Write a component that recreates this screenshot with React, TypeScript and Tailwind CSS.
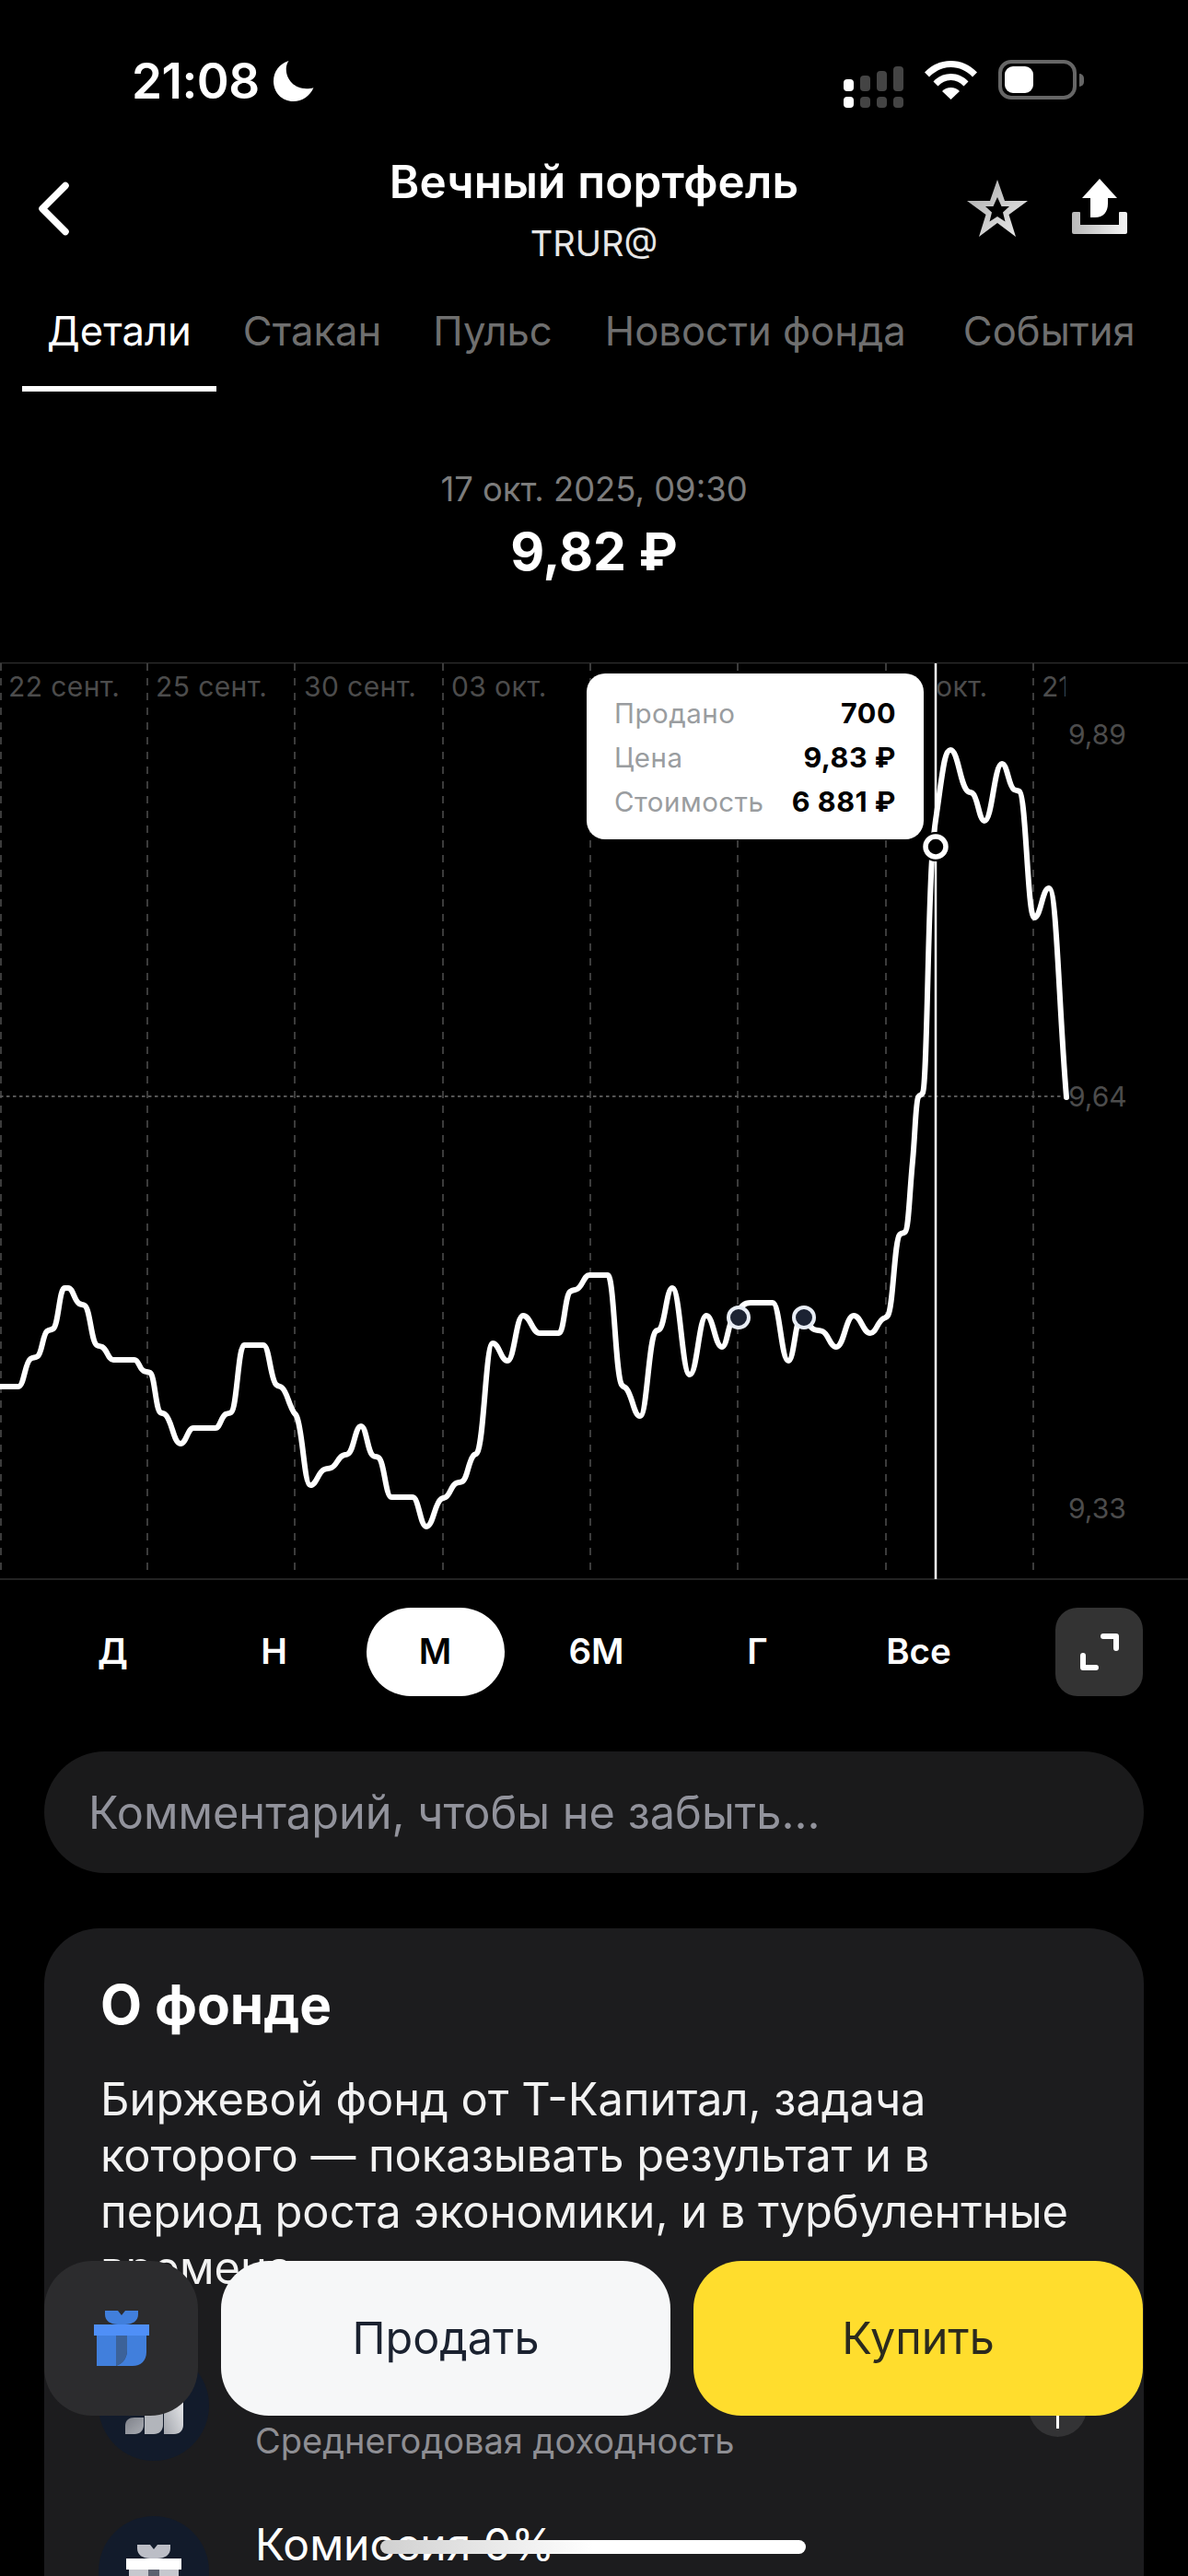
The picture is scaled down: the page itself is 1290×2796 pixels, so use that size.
import React from 'react';

// точки кривой в координатах экрана
const curve: [number, number][] = [
  [0, 1505], [20, 1505], [33, 1475], [41, 1472], [51, 1445], [58, 1442], [70, 1398], [74, 1398], [86, 1415], [92, 1417],
  [105, 1460], [111, 1462], [123, 1476], [146, 1476], [156, 1488], [163, 1490], [174, 1533], [179, 1535], [196, 1567],
  [210, 1550], [234, 1550], [245, 1535], [251, 1533], [265, 1460], [286, 1460], [300, 1503], [306, 1506], [319, 1533],
  [322, 1537], [337, 1612], [352, 1595], [360, 1593], [372, 1580], [378, 1578], [392, 1548], [405, 1580], [411, 1582],
  [425, 1625], [448, 1625], [463, 1657], [479, 1627], [484, 1625], [495, 1610], [502, 1608], [514, 1580], [518, 1577],
  [535, 1458], [551, 1477], [568, 1428], [586, 1447], [607, 1447], [619, 1402], [627, 1399], [640, 1384], [660, 1384],
  [675, 1503], [680, 1507], [695, 1537], [712, 1445], [716, 1443], [730, 1398], [749, 1492], [767, 1428], [784, 1462],
  [796, 1430], [815, 1414], [839, 1414], [856, 1477], [870, 1430], [884, 1443], [893, 1445], [908, 1462], [927, 1428],
  [945, 1447], [958, 1432], [964, 1428], [977, 1340], [983, 1337], [991, 1260], [997, 1191], [1002, 1186], [1012, 932],
  [1016, 890], [1032, 814], [1051, 859], [1056, 861], [1069, 891], [1088, 829], [1101, 857], [1107, 859], [1123, 996],
  [1139, 964], [1158, 1191],
];

// монотонный сплайн, чтобы пики не выбивались за точки
function smoothPath(pts: [number, number][]) {
  const n = pts.length;
  const slopes: number[] = [];
  for (let i = 0; i < n - 1; i++) slopes.push((pts[i + 1][1] - pts[i][1]) / (pts[i + 1][0] - pts[i][0]));
  const tang: number[] = [slopes[0]];
  for (let i = 1; i < n - 1; i++) {
    tang.push(slopes[i - 1] * slopes[i] <= 0 ? 0 : (2 * slopes[i - 1] * slopes[i]) / (slopes[i - 1] + slopes[i]));
  }
  tang.push(slopes[n - 2]);
  let d = `M${pts[0][0]} ${pts[0][1]}`;
  for (let i = 0; i < n - 1; i++) {
    const h = (pts[i + 1][0] - pts[i][0]) * 0.45;
    d += `C${pts[i][0] + h} ${pts[i][1] + tang[i] * h} ${pts[i + 1][0] - h} ${pts[i + 1][1] - tang[i + 1] * h} ${pts[i + 1][0]} ${pts[i + 1][1]}`;
  }
  return d;
}

const CHART_TOP = 719;
const gridX = [1, 160, 320, 481, 641, 801, 962, 1122];
const dates = [
  { x: 9, t: '22 сент.' },
  { x: 169, t: '25 сент.' },
  { x: 330, t: '30 сент.' },
  { x: 490, t: '03 окт.' },
  { x: 1016, t: 'окт.' },
];

const Chart = () => (
  <div className="relative h-[996px] w-full">
    <svg className="absolute inset-0" width={1290} height={996} viewBox={`0 ${CHART_TOP} 1290 996`} fill="none">
      <line x1="0" x2="1290" y1="719.5" y2="719.5" stroke="#2e2e2e" strokeWidth="1.5" />
      <line x1="0" x2="1290" y1="1714" y2="1714" stroke="#2e2e2e" strokeWidth="1.5" />
      {gridX.map((x) => (
        <line key={x} x1={x} x2={x} y1="720" y2="1710" stroke="#3c3c3c" strokeWidth="2" strokeDasharray="8 8" />
      ))}
      <line x1="0" x2="1158" y1="1190" y2="1190" stroke="#555" strokeWidth="2" strokeDasharray="3.5 3.5" />
      <line x1="1016" x2="1016" y1="720" y2="1714" stroke="#fff" strokeWidth="2.5" />
      <path d={smoothPath(curve)} stroke="#fff" strokeWidth="6" strokeLinejoin="round" strokeLinecap="round" />
      <circle cx="802" cy="1430" r="11" fill="#1c2333" stroke="#e8edf5" strokeWidth="4" />
      <circle cx="873" cy="1430" r="11" fill="#1c2333" stroke="#e8edf5" strokeWidth="4" />
      <circle cx="1016" cy="919" r="16" fill="#000" />
      <circle cx="1016" cy="919" r="11" fill="#000" stroke="#fff" strokeWidth="5.5" />
    </svg>
    {dates.map((d) => (
      <span
        key={d.t}
        className="absolute top-[8px] text-[30px] leading-[36px] text-[#4c4c4c] tracking-[0.4px]"
        style={{ left: d.x }}
      >
        {d.t}
      </span>
    ))}
    <span className="absolute top-[8px] left-[1131px] w-[26px] overflow-hidden text-[30px] leading-[36px] text-[#4c4c4c]">21</span>
    <span className="absolute left-[1160px] top-[60px] text-[30px] leading-[36px] text-[#4c4c4c]">9,89</span>
    <span className="absolute left-[1160px] top-[453px] text-[30px] leading-[36px] text-[#4c4c4c]">9,64</span>
    <span className="absolute left-[1160px] top-[900px] text-[30px] leading-[36px] text-[#4c4c4c]">9,33</span>

    <div className="absolute left-[637px] top-[12px] flex h-[180px] w-[366px] flex-col gap-[8px] rounded-[20px] bg-white px-[30px] pt-[23px] text-[29.5px] leading-[40px] tracking-[0.5px]">
      <div className="flex justify-between">
        <span className="text-[#9a9da0]">Продано</span>
        <span className="text-[30.5px] font-bold text-black">700</span>
      </div>
      <div className="flex justify-between">
        <span className="text-[#9a9da0]">Цена</span>
        <span className="text-[30.5px] font-bold text-black">9,83 ₽</span>
      </div>
      <div className="flex justify-between">
        <span className="text-[#9a9da0]">Стоимость</span>
        <span className="text-[30.5px] font-bold text-black">6 881 ₽</span>
      </div>
    </div>
  </div>
);

const StatusBar = () => (
  <div className="flex h-[169px] items-start justify-between pt-[58px] pl-[143px] pr-[113px]">
    <div className="flex items-center gap-[15px]">
      <span className="text-[53px] font-semibold leading-[60px] tracking-[-0.5px]">21:08</span>
      <svg width="44" height="44" viewBox="0 0 40 40" fill="#fff">
        <path d="M15 0C5.500 3 0 11 0 20c0 11.500 8.500 20 19.500 20 9 0 16.500-5.500 20-13.500-2 .7-4.500 1-7 1C21 27.500 12.500 19 12.500 8c0-2.800 .9-5.600 2.500-8z" />
      </svg>
    </div>
    <div className="flex items-start gap-[23px] pt-[6px]">
      <svg width="65" height="45" viewBox="0 0 65 45" className="mt-[8px]">
        <rect x="0" y="14" width="11" height="13" rx="4" fill="#fff" />
        <rect x="18" y="10" width="11" height="17" rx="4" fill="#444" />
        <rect x="36" y="5" width="11" height="22" rx="4" fill="#444" />
        <rect x="54" y="0" width="11" height="27" rx="4" fill="#444" />
        <rect x="0" y="33" width="11" height="12" rx="4" fill="#fff" />
        <rect x="18" y="33" width="11" height="12" rx="4" fill="#444" />
        <rect x="36" y="33" width="11" height="12" rx="4" fill="#444" />
        <rect x="54" y="33" width="11" height="12" rx="4" fill="#444" />
      </svg>
      <svg width="57" height="42" viewBox="0 0 57 42" fill="#fff" className="mt-[2px]">
        <path d="M28.500 0C17.500 0 7.600 4.400 0 12.500l5 5C11.500 10.800 19.500 7 28.500 7s17 3.800 23.500 10.500l5-5C49.400 4.400 39.500 0 28.500 0z" />
        <path d="M28.500 14c-7.500 0-13.900 3-19 8.500l5 5c4-4.200 8.500-6.500 14-6.500s10 2.300 14 6.500l5-5c-5.100-5.500-11.500-8.500-19-8.500z" />
        <path d="M28.500 29c-3.800 0-6.800 1.400-9.500 4l9.500 9 9.500-9c-2.700-2.600-5.700-4-9.500-4z" />
      </svg>
      <div className="mt-[1px] flex items-center gap-[3px]">
        <div className="flex h-[43px] w-[85px] items-center rounded-[14px] border-[4px] border-[#666] p-[3px]">
          <div className="h-[29px] w-[31px] rounded-[9px] bg-white" />
        </div>
        <div className="h-[14px] w-[5px] rounded-r-full bg-[#666]" />
      </div>
    </div>
  </div>
);

const Header = () => (
  <div className="relative h-[158px]">
    <svg className="absolute left-[41px] top-[28px]" width="35" height="59" viewBox="0 0 35 59" fill="none">
      <path d="M30 4.500 5 29.500l25 25" stroke="#fff" strokeWidth="7.500" strokeLinecap="round" strokeLinejoin="round" />
    </svg>
    <div className="flex flex-col items-center">
      <span className="text-[49.400px] font-semibold leading-[56px] tracking-[0.2px]">Вечный портфель</span>
      <span className="mt-[17px] text-[38px] leading-[44px] text-[#e6e6e6]">TRUR@</span>
    </div>
    <svg className="absolute left-[1050px] top-[26px]" width="66" height="62" viewBox="0 0 66 62">
      <defs>
        <linearGradient id="starFill" x1="0" y1="0" x2="1" y2="1">
          <stop offset="0" stopColor="#a8a8a8" />
          <stop offset="1" stopColor="#eeeeee" />
        </linearGradient>
      </defs>
      <path
        fillRule="evenodd"
        fill="url(#starFill)"
        d="M33 0l8 23h25L45.500 38l7.500 24L33 47 13 62l7.500-24L0 23h25zM33 19l-4.500 10H20l7 6.500-2.500 10L33 40l8.500 5.500-2.500-10 7-6.500h-8.500z"
      />
    </svg>
    <svg className="absolute left-[1164px] top-[25px]" width="60" height="60" viewBox="0 0 60 60">
      <defs>
        <linearGradient id="trayFill" x1="0" y1="0" x2="1" y2="0">
          <stop offset="0" stopColor="#b8b8b8" />
          <stop offset="1" stopColor="#f5f5f5" />
        </linearGradient>
      </defs>
      <path d="M30 0l19 21H39v6c0 9-5 15-14 15h-5V21H11z" fill="#fff" />
      <path d="M0 38a2 2 0 0 1 2-2h6a1 1 0 0 1 1 1v13h42V37a1 1 0 0 1 1-1h6a2 2 0 0 1 2 2v20a2 2 0 0 1-2 2H2a2 2 0 0 1-2-2z" fill="url(#trayFill)" />
    </svg>
  </div>
);

const tabs = [
  { label: 'Детали', on: true, gap: 'mr-[56px]' },
  { label: 'Стакан', gap: 'mr-[56px]' },
  { label: 'Пульс', gap: 'mr-[57px]' },
  { label: 'Новости фонда', gap: 'mr-[62px]' },
  { label: 'События', gap: 'mr-0' },
];

const Tabs = () => (
  <div className="flex h-[100px] items-start pl-[51px] text-[43.600px] leading-[54px]">
    {tabs.map((t) => (
      <span key={t.label} className={`relative pt-[6px] whitespace-nowrap ${t.gap} ${t.on ? 'text-white' : 'text-[#6f6f6f]'}`}>
        {t.label}
        {t.on && <span className="absolute -left-[27px] top-[92px] h-[6px] w-[211px] bg-white" />}
      </span>
    ))}
  </div>
);

const periods = ['Д', 'Н', 'М', '6М', 'Г', 'Все'];

const Periods = () => (
  <div className="mt-[30px] flex h-[96px] items-center pl-[35px] pr-[49px]">
    {periods.map((p) => (
      <div
        key={p}
        className={`flex h-[96px] w-[175px] items-center justify-center text-[38.500px] font-semibold ${p === 'М' ? 'text-black' : 'text-white'}`}
      >
        {p === 'М' ? (
          <span className="flex h-[96px] w-[150px] items-center justify-center rounded-full bg-white">{p}</span>
        ) : (
          p
        )}
      </div>
    ))}
    <div className="ml-auto flex h-[96px] w-[95px] items-center justify-center rounded-[24px] bg-[#333333]">
      <svg width="44" height="42" viewBox="0 0 44 42" fill="none" stroke="#fff" strokeWidth="6" strokeLinecap="round" strokeLinejoin="round">
        <path d="M26 4h14v13" />
        <path d="M4 25v13h14" />
      </svg>
    </div>
  </div>
);

// подарок: лента, бант и коробка с изогнутой полосой
const Gift = ({ bow, band, box, strip }: { bow: string; band: string; box: string; strip: string }) => (
  <svg width="60" height="60" viewBox="0 0 60 60">
    <path d="M12 0h14l4 5 4-5h14v4c0 7-6 11-14 11h-8C18 15 12 11 12 4z" fill={bow} />
    <rect x="0" y="15" width="60" height="12" fill={band} />
    <rect x="3" y="27" width="21" height="33" fill={box} />
    <path d="M24 27h12v16c0 8-4 14-12 17z" fill={strip} />
    <path d="M36 27h21v18c0 9-6 15-15 15H24c8-3 12-9 12-17z" fill={box} />
  </svg>
);

const App = () => {
  return (
    <div
      className="relative h-[2796px] w-[1290px] overflow-hidden bg-black text-white"
      style={{ fontFamily: 'Inter, "Noto Sans", sans-serif' }}
    >
      <StatusBar />
      <Header />
      <Tabs />

      <div className="flex h-[292px] flex-col items-center pt-[82px]">
        <span className="text-[36.400px] leading-[44px] text-[#7c7c7c]">17 окт. 2025, 09:30</span>
        <span className="mt-[10px] text-[57px] font-bold leading-[72px]">9,82 ₽</span>
      </div>

      <Chart />
      <Periods />

      <div className="mx-[48px] mt-[60px] flex h-[132px] items-center rounded-[66px] bg-[#1a1a1b] pl-[48px] pt-[2px] text-[48.700px] text-[#92939c]">
        Комментарий, чтобы не забыть...
      </div>

      <div className="mx-[48px] mt-[60px] h-[800px] rounded-[60px] bg-[#1c1c1e] px-[61px] pt-[48px]">
        <h2 className="text-[58.500px] font-bold leading-[70px]">О фонде</h2>
        <p className="mt-[37px] whitespace-nowrap text-[48.800px] leading-[61px] text-[#f2f2f2]">
          Биржевой фонд от Т-Капитал, задача
          <br />
          которого — показывать результат и в
          <br />
          период роста экономики, и в турбулентные
          <br />
          времена
        </p>

        <div className="relative mt-[59px] h-[120px] -ml-[2px]">
          <div className="absolute left-0 top-0 flex h-[120px] w-[120px] items-start justify-center rounded-full bg-[#121b2b]">
            <svg width="63" height="51" viewBox="0 0 63 51" className="mt-[40px]">
              <defs>
                <linearGradient id="barA" x1="0" y1="0" x2="1" y2="1">
                  <stop offset="0" stopColor="#7f828a" />
                  <stop offset="1" stopColor="#a9acb3" />
                </linearGradient>
                <linearGradient id="barB" x1="1" y1="0" x2="0" y2="1">
                  <stop offset="0" stopColor="#f2f3f5" />
                  <stop offset="1" stopColor="#a3a6ad" />
                </linearGradient>
              </defs>
              <path d="M0 51V42c0-6 4-9 10-9h10v8c0 6-4 10-10 10z" fill="url(#barA)" />
              <path d="M21 51V10h20v31c0 6-4 10-10 10z" fill="#b2b5bb" />
              <path d="M42 51V0h21v41c0 6-4 10-10 10z" fill="url(#barB)" />
            </svg>
          </div>
          <span className="absolute left-[170px] top-[75px] text-[38px] leading-[46px] text-[#8e8e93]">Среднегодовая доходность</span>
          <div className="absolute left-[1010px] top-[31px] flex h-[63px] w-[63px] items-center justify-center rounded-full bg-[#333335]">
            <div className="mt-[30px] h-[14px] w-[3px] bg-white" />
          </div>
        </div>

        <div className="mt-[60px] flex items-start gap-[50px] -ml-[2px]">
          <div className="flex h-[120px] w-[120px] shrink-0 justify-center rounded-full bg-[#121b2b] pt-[31px]">
            <Gift bow="#bcbec6" band="#ffffff" box="#c6c8ce" strip="#5d6270" />
          </div>
          <span className="pt-[2px] text-[48px] leading-[58px]">Комиссия 0%</span>
        </div>
      </div>

      {/* нижняя панель поверх контента */}
      <div className="absolute left-[48px] top-[2454px] flex h-[168px] w-[1193px] gap-[25px]">
        <div className="flex w-[167px] items-center justify-center rounded-[52px] bg-[#2c2c2e]">
          <Gift bow="#417fdc" band="#4f8ff7" box="#417fdc" strip="#3c6299" />
        </div>
        <button className="flex-1 rounded-[52px] bg-[#f6f7f8] text-[48.500px] text-[#1b2230]">Продать</button>
        <button className="flex-1 rounded-[52px] bg-[#ffdd2d] text-[48.500px] text-[#2b2a1e]">Купить</button>
      </div>
      <div className="absolute left-[413px] top-[2757px] h-[15px] w-[462px] rounded-full bg-gradient-to-r from-[#d0d0d0] via-white to-white" />
    </div>
  );
};

export default App;
